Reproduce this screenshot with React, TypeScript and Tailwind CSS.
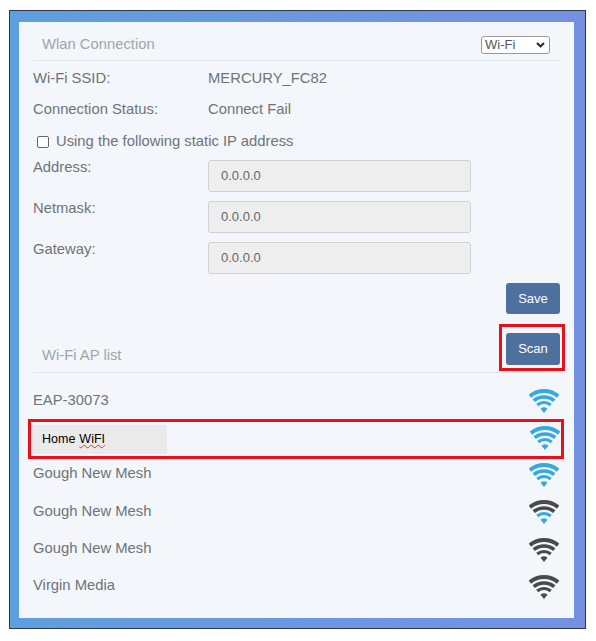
const B = "#37a9e1";
const D = "#4a4a4a";
function Wifi({ c }: { c: string[] }) {
  return (
    <svg width="30" height="25" viewBox="0 0 30 25" fill="none">
      <path d="M0.9 8.15A22 22 0 0 1 29.1 8.15" stroke={c[0]} strokeWidth="4" />
      <path d="M4.7 12.74A16 16 0 0 1 25.3 12.74" stroke={c[1]} strokeWidth="3.6" />
      <path d="M8.25 16.96A10.5 10.5 0 0 1 21.75 16.96" stroke={c[2]} strokeWidth="3.2" />
      <path d="M15 25L11.5 20.8A5.5 5.5 0 0 1 18.5 20.8Z" fill={c[3]} />
    </svg>
  );
}
const sans = "font-['Liberation_Sans',Arial,sans-serif]";
function Info({ label, value }: { label: string; value: string }) {
  return (
    <div className="flex h-[31px] items-center text-[14.8px] text-[#6f7378]">
      <span className="w-[175px]">{label}</span>
      <span>{value}</span>
    </div>
  );
}
function Field({ label }: { label: string }) {
  return (
    <div className="flex h-[41px] text-[14.8px] text-[#6f7378]">
      <span className="w-[175px] leading-[12px]">{label}</span>
      <div className="mt-[-1px] flex h-[32px] w-[263px] items-center rounded-[3px] border border-[#cfd1d3] bg-[#eeeeee] pl-[12px] text-[13px] text-[#666]">0.0.0.0</div>
    </div>
  );
}
function Ap({ name, c }: { name: string; c: string[] }) {
  return (
    <div className="flex h-[37.3px] items-center justify-between pr-[1px] text-[14.8px] text-[#6f7378]">
      <span>{name}</span>
      <div className="mt-[2px] flex"><Wifi c={c} /></div>
    </div>
  );
}
export default function App() {
  return (
    <div className={`h-[641px] w-[596px] bg-white pl-[9px] pt-[10px] ${sans}`}>
      <div className="h-[619px] w-[577px] border border-[#2d3748] bg-gradient-to-r from-[#5f9fde] to-[#7590e2] pl-[9px] pt-[11px]">
        <div className="h-[596px] w-[555px] bg-[#f3f7fb] pl-[14px] pr-[14px]">
          <div className="flex h-[39px] items-center justify-between border-b border-[#e6e9ec] pl-[9px] pr-[10px] pt-[7px]">
            <span className="text-[14.8px] text-[#a0a5aa]">Wlan Connection</span>
            <div className="flex h-[18px] w-[69px] items-center justify-between rounded-[3px] border border-[#999] bg-white pl-[3px] pr-[3px] text-[13px] text-[#555]">
              <span>Wi-Fi</span>
              <svg width="9" height="6" viewBox="0 0 9 6" fill="none" className="mr-[1px]"><path d="M1 1L4.5 4.4L8 1" stroke="#222" strokeWidth="2" /></svg>
            </div>
          </div>
          <div className="pt-[2px]">
            <Info label="Wi-Fi SSID:" value="MERCURY_FC82" />
            <Info label="Connection Status:" value="Connect Fail" />
          </div>
          <div className="mt-[1px] flex h-[31px] items-center pl-[4px] text-[14.8px] text-[#6f7378]">
            <span className="mr-[7px] h-[12px] w-[12px] rounded-[2px] border border-[#666] bg-white" />
            Using the following static IP address
          </div>
          <div className="pt-[4px]">
            <Field label="Address:" />
            <Field label="Netmask:" />
            <Field label="Gateway:" />
          </div>
          <div className="mt-[-1px] flex justify-end">
            <div className="flex h-[31px] w-[54px] items-center justify-center rounded-[3px] bg-[#4d709f] text-[13px] text-white">Save</div>
          </div>
          <div className="flex h-[59px] items-end justify-between border-b border-[#e6e9ec] pl-[9px]">
            <span className="pb-[6px] text-[14.8px] text-[#a0a5aa]">Wi-Fi AP list</span>
            <div className="mb-[1px] mr-[-5px] border-[3px] border-[#e8101a] pb-[3px] pl-[4px] pr-[2px] pt-[6px]">
              <div className="flex h-[32px] w-[54px] items-center justify-center rounded-[3px] bg-[#4d709f] text-[13px] text-white">Scan</div>
            </div>
          </div>
          <div className="pt-[8px]">
            <Ap name="EAP-30073" c={[B, B, B, B]} />
            <div className="relative z-10 ml-[-5px] mr-[-4px] mt-[1px] flex h-[40px] justify-between border-[3px] border-[#e8101a] pr-[1px]">
              <div className="mt-[3px] flex h-[29px] w-[136px] items-center bg-[#eaeaea] pl-[11px] text-[12.5px] text-black">
                Home <span className="ml-1 underline decoration-wavy decoration-[#e0303a] decoration-1">WiFI</span>
              </div>
              <div className="mt-[3px] flex"><Wifi c={[B, B, B, B]} /></div>
            </div>
            <div className="mt-[-4.5px]">
              <Ap name="Gough New Mesh" c={[B, B, B, B]} />
              <Ap name="Gough New Mesh" c={[D, D, B, B]} />
              <Ap name="Gough New Mesh" c={[D, D, D, D]} />
              <Ap name="Virgin Media" c={[D, D, D, D]} />
            </div>
          </div>
        </div>
      </div>
    </div>
  );
}
